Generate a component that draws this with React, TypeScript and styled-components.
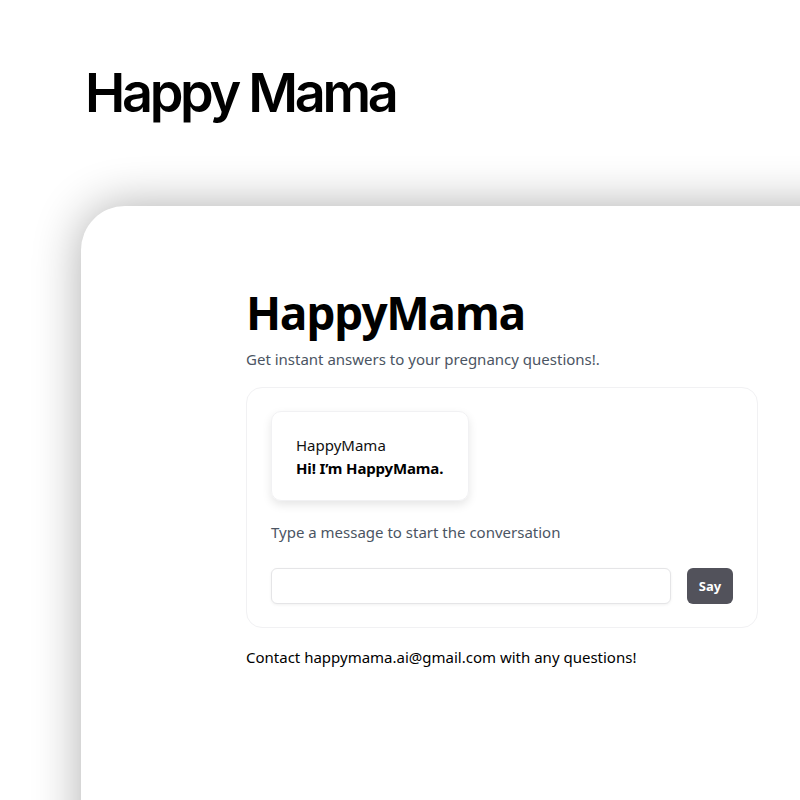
import React, { useState } from 'react';
import styled, { createGlobalStyle } from 'styled-components';

const GlobalStyle = createGlobalStyle`
  html, body {
    margin: 0;
    padding: 0;
    background: #ffffff;
    overflow: hidden;
  }
  body {
    font-family: "Noto Sans", "Open Sans", sans-serif;
    color: #111;
  }
`

const Page = styled.div`
  width: 800px;
  height: 800px;
  overflow: hidden;
  display: flex;
  flex-direction: column;
`

const Header = styled.header`
  flex-shrink: 0;
  padding: 66px 0 0 85px;
  height: 144px;
  box-sizing: border-box;
`

const Logo = styled.div`
  font-family: Inter, "Noto Sans", sans-serif;
  font-weight: 600;
  font-size: 54px;
  letter-spacing: -3.3px;
  line-height: 1;
  color: #000;
`

const Frame = styled.div`
  margin-top: 62px;
  margin-left: 81px;
  width: 780px;
  height: 700px;
  flex-shrink: 0;
  background: #fff;
  border-radius: 44px 0 0 0;
  box-shadow: 0 0 48px rgba(0, 0, 0, 0.32);
  padding: 80px 0 0 165px;
  box-sizing: border-box;
`

const Content = styled.main`
  width: 512px;
  display: flex;
  flex-direction: column;
`

const Title = styled.h1`
  margin: 0;
  font-family: "Open Sans", "Noto Sans", sans-serif;
  font-weight: 700;
  font-size: 46px;
  letter-spacing: -1.4px;
  line-height: 52px;
  color: #000;
`

const Subtitle = styled.p`
  margin: 11px 0 0;
  font-size: 15px;
  line-height: 20px;
  color: #4b5563;
`

const ChatBox = styled.section`
  margin-top: 18px;
  border: 1px solid #f1f1f3;
  border-radius: 16px;
  padding: 23px 24px 23px;
  display: flex;
  flex-direction: column;
`

const Bubble = styled.div`
  align-self: flex-start;
  min-width: 198px;
  box-sizing: border-box;
  padding: 23px 24px 21px;
  border: 1px solid #f1f1f3;
  border-radius: 10px;
  box-shadow: 0 4px 10px rgba(0, 0, 0, 0.1);
  display: flex;
  flex-direction: column;
  gap: 2px;
  white-space: nowrap;
`

const Sender = styled.span`
  font-size: 15px;
  line-height: 20px;
  color: #111;
`

const Message = styled.span`
  font-size: 15px;
  line-height: 22px;
  font-weight: 700;
  letter-spacing: -0.15px;
  color: #000;
`

const Hint = styled.p`
  margin: 21px 0 0;
  font-size: 15px;
  line-height: 20px;
  color: #4b5563;
`

const InputRow = styled.form`
  margin-top: 26px;
  display: flex;
  gap: 16px;
`

const TextInput = styled.input`
  flex: 1;
  height: 36px;
  box-sizing: border-box;
  border: 1px solid #e5e5e7;
  border-radius: 6px;
  box-shadow: 0 1px 3px rgba(0, 0, 0, 0.06);
  padding: 0 10px;
  font-size: 14px;
  outline: none;
`

const SayButton = styled.button`
  width: 46px;
  height: 36px;
  border: none;
  border-radius: 6px;
  background: #52525b;
  color: #fff;
  font-family: "Noto Sans", sans-serif;
  font-weight: 700;
  font-size: 13px;
  cursor: pointer;
`

const Footer = styled.p`
  margin: 19px 0 0;
  font-size: 15px;
  line-height: 20px;
  color: #000;
`

const App: React.FC = () => {
  const [text, setText] = useState('')

  const handleSubmit = (e: React.FormEvent) => {
    e.preventDefault()
    setText('')
  }

  return (
    <Page>
      <GlobalStyle />
      <Header>
        <Logo>Happy Mama</Logo>
      </Header>
      <Frame>
        <Content>
          <Title>HappyMama</Title>
          <Subtitle>Get instant answers to your pregnancy questions!.</Subtitle>
          <ChatBox>
            <Bubble>
              <Sender>HappyMama</Sender>
              <Message>Hi! I’m HappyMama.</Message>
            </Bubble>
            <Hint>Type a message to start the conversation</Hint>
            <InputRow onSubmit={handleSubmit}>
              <TextInput value={text} onChange={(e) => setText(e.target.value)} />
              <SayButton type="submit">Say</SayButton>
            </InputRow>
          </ChatBox>
          <Footer>Contact happymama.ai@gmail.com with any questions!</Footer>
        </Content>
      </Frame>
    </Page>
  );
}

export default App;
